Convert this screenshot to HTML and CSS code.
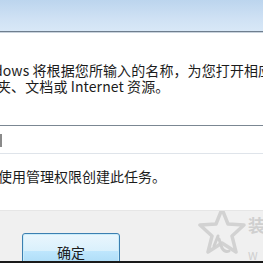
FILE: index.html
```html
<!DOCTYPE html>
<html>

<head>
    <meta charset="utf-8" />
    <title>运行</title>
    <meta name="viewport" content="width=device-width, initial-scale=1">
    <link rel="stylesheet" href="styles.css">
</head>

<body>
    <div class="dialog">
        <!-- 标题栏 -->
        <div class="titlebar"></div>

        <div class="content">
            <p class="intro">
                <span class="line">dows 将根据您所输入的名称，为您打开相应</span>
                <span class="line line2">夹、文档或 Internet 资源。</span>
            </p>
            <!-- 输入框 -->
            <div class="field"><span class="caret"></span></div>
            <p class="admin">使用管理权限创建此任务。</p>
        </div>

        <!-- 底部按钮区域 -->
        <div class="footer">
            <button class="ok" type="button">确定</button>
            <svg class="mark" width="48" height="50" viewBox="0 0 48 50">
                <path d="M24 3 L30 18 L46 19 L34 30 L38 46 L24 37 L10 46 L14 30 L2 19 L18 18 Z"
                      fill="none" stroke="#d2d2d2" stroke-width="3.5" stroke-linejoin="round" />
                <path d="M16 40 L20 30 M21 33 L24 42 Q27 47 31 45" fill="none" stroke="#cfcfcf" stroke-width="3" stroke-linecap="round" />
            </svg>
            <span class="mark-text">装<br><small>W</small></span>
        </div>
    </div>
</body>

</html>
```

FILE: styles.css
```css
html, body {
  margin: 0;
  padding: 0;
  overflow: hidden;
}

body {
  width: 263px;
  height: 263px;
  font-family: "Noto Sans CJK SC", "Noto Sans", sans-serif;
  font-size: 14px;
  color: #1c1c1c;
  background: #fff;
}

.dialog {
  width: 263px;
  height: 263px;
  overflow: hidden;
}

.titlebar {
  height: 31px;
  background: linear-gradient(#bcd5ee, #cfe1f4 60%, #d8e8f7);
  border-bottom: 1px solid #6f7e8e;
  box-shadow: 0 1px 0 #c9d3dd;
}

.content {
  padding-top: 30px;
  height: 148px;
  overflow: hidden;
}

.intro {
  margin: 0 0 0 -6px;
  line-height: 16px;
  white-space: nowrap;
  letter-spacing: 0.1px;
}

.line {
  display: block;
}

.line2 {
  margin-left: 3px;
}

.field {
  margin-top: 31px;
  margin-left: -10px;
  width: 280px;
  height: 27px;
  border-top: 1px solid #7b8792;
  border-bottom: 1px solid #dfe4ea;
  position: relative;
}

/* 左侧被截掉的字符残留 */
.caret {
  position: absolute;
  left: 10px;
  top: 8px;
  width: 2px;
  height: 13px;
  background: #8a8a8a;
}

.admin {
  margin: 14px 0 0 -2px;
  line-height: 16px;
  white-space: nowrap;
}

.footer {
  height: 50px;
  background: #f0f0f0;
  border-top: 1px solid #e6e6e6;
  border-bottom: 2px solid #1a1a1a;
  position: relative;
  overflow: hidden;
}

.ok {
  display: block;
  margin: 22px 0 0 22px;
  width: 98px;
  height: 36px;
  border: 1px solid #3c7fb1;
  border-radius: 3px;
  background: linear-gradient(#eaf6fd, #d9f0fc 50%, #bee6fd 51%, #a7d9f5);
  box-shadow: inset 0 0 0 1px #c9ecfa;
  font-family: "Noto Sans CJK SC", sans-serif;
  font-size: 14px;
  color: #1c1c1c;
  padding: 2px 0 0;
}

.mark {
  position: absolute;
  left: 198px;
  top: -5px;
}

.mark-text {
  position: absolute;
  left: 248px;
  top: 0;
  font-size: 17px;
  line-height: 28px;
  font-weight: bold;
  color: #cfcfcf;
}

.mark-text small {
  font-size: 11px;
  font-weight: normal;
  line-height: 12px;
}
```
